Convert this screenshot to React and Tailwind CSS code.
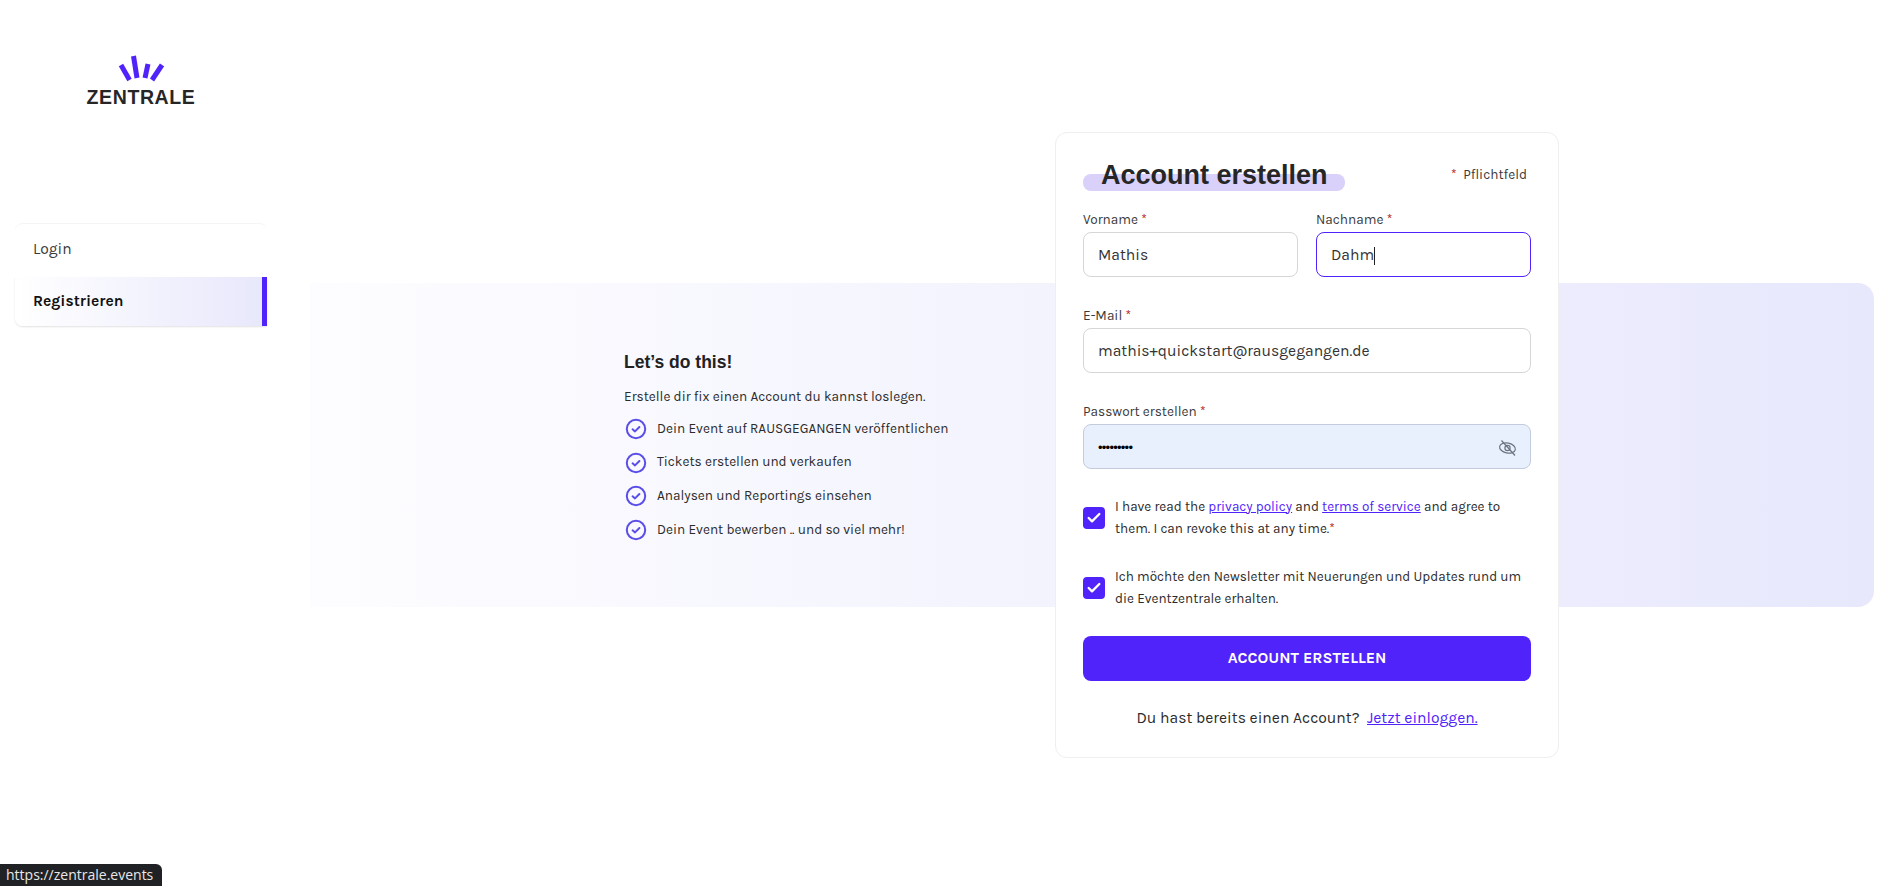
import React from 'react';
import { Check } from 'lucide-react';

const BODY = "font-['Karla','Noto_Sans',sans-serif]";

const Logo = () => (
    <div className="flex flex-col items-center w-[110px] ml-[86px]">
        <svg width="46" height="28" viewBox="0 0 46 28" className="block">
            <g stroke="#5123fb" strokeWidth="5" fill="none">
                <path d="M3 10 L11.5 25" />
                <path d="M15.5 1 L19 23" />
                <path d="M30 9 L27 23" />
                <path d="M44 10 L34 25" />
            </g>
        </svg>
        <span className="font-['Liberation_Sans',sans-serif] font-bold text-[19.5px] leading-[18px] mt-[5px] text-[#262626] tracking-[0.6px] whitespace-nowrap">ZENTRALE</span>
    </div>
);

const Sidebar = () => (
    <aside className="w-[290px] shrink-0 pt-[55px]">
        <Logo />
        <nav className="mt-[117px] ml-[15px] w-[252px] rounded-t-lg border-t border-[#f5f5f5]">
            <a className="flex items-center h-[53px] pb-[2px] pl-[18px] text-[15.6px] text-[#3a3a3a]">Login</a>
            <a className="flex items-center h-[49px] pl-[18px] text-[15.6px] font-bold text-[#111] rounded-bl-lg border-r-[5px] border-[#5123fb] bg-linear-to-r from-white to-[#e8e8fc] shadow-[0_1px_2px_rgba(0,0,0,0.12)]">Registrieren</a>
        </nav>
    </aside>
);

const BENEFITS = [
    'Dein Event auf RAUSGEGANGEN veröffentlichen',
    'Tickets erstellen und verkaufen',
    'Analysen und Reportings einsehen',
    'Dein Event bewerben .. und so viel mehr!',
];

const CheckCircle = () => (
    <svg width="22" height="22" viewBox="0 0 22 22" fill="none" className="shrink-0">
        <circle cx="11" cy="11" r="9.2" stroke="#5a4ee8" strokeWidth="2" />
        <path d="M7.6 11.3 L10 13.4 L14.4 9" stroke="#5a4ee8" strokeWidth="2" strokeLinecap="round" strokeLinejoin="round" />
    </svg>
);

const EyeSlash = () => (
    <svg width="20" height="18" viewBox="0 0 20 18" fill="none" stroke="#6b7280" strokeWidth="1.2" className="ml-auto">
        <ellipse cx="9.5" cy="9" rx="8" ry="5" transform="rotate(12 9.5 9)" />
        <circle cx="9.5" cy="9" r="2.6" />
        <path d="M3.5 1.5 L17 16.5" />
    </svg>
);

const Intro = () => (
    <div className="relative w-[420px] ml-[334px] mt-[8px] text-[#2b2b2b]">
        <h2 className="font-['Liberation_Sans',sans-serif] font-bold text-[17.5px] leading-[22px] text-[#222]">Let’s do this!</h2>
        <p className="mt-[15px] text-[13.6px] leading-[18px]">Erstelle dir fix einen Account du kannst loslegen.</p>
        <ul className="mt-[6px] flex flex-col">
            {BENEFITS.map((text) => (
                <li key={text} className="flex items-center gap-[10px] h-[33.7px] pl-[1px] text-[13.6px]">
                    <CheckCircle />
                    <span>{text}</span>
                </li>
            ))}
        </ul>
    </div>
);

const Star = () => <span className="text-[#b3261e]">*</span>;

const Field = ({ label, value, focused, autofill, children, className = '' }) => (
    <div className={className}>
        <label className="block text-[13.6px] leading-[18px] text-[#3a3a3a]">{label} <Star /></label>
        <div className={`mt-[3px] h-[45px] rounded-lg border flex items-center pt-[2px] pl-[14px] pr-[12px] text-[15.7px] text-[#333] ${focused ? 'border-[#5123fb]' : autofill ? 'border-[#c3cbdc] bg-[#e8f0fe]' : 'border-[#d6d6d6]'}`}>
            {value}
            {children}
        </div>
    </div>
);

const CheckBox = () => (
    <span className="w-[22px] h-[22px] shrink-0 rounded-[4px] bg-[#5123fb] flex items-center justify-center">
        <Check size={16} color="#fff" strokeWidth={3.5} />
    </span>
);

const TextLink = ({ children }) => <a className="text-[#5123fb] underline">{children}</a>;

const SignupCard = () => (
    <section className="relative ml-auto mr-[339px] w-[504px] h-[626px] shrink-0 rounded-xl border border-[#efefef] bg-white pt-[27px] pl-[27px] pr-[27px]">
        <div className="flex items-start justify-between h-[41px]">
            <div className="relative w-[262px] h-[31px]">
                <div className="absolute left-0 right-0 bottom-0 h-[17px] rounded-lg bg-[#d9d1f9]" />
                <h1 className="relative pl-[18px] font-['Liberation_Sans',sans-serif] font-bold text-[27px] leading-[30px] text-[#262626] whitespace-nowrap">Account erstellen</h1>
            </div>
            <span className="mt-[6px] mr-[4px] text-[13.6px] leading-[18px] text-[#3a3a3a]"><Star />&nbsp; Pflichtfeld</span>
        </div>
        <div className="flex gap-[18px] mt-[10px]">
            <Field className="flex-1" label="Vorname" value="Mathis" />
            <Field className="flex-1" label="Nachname" value="Dahm" focused>
                <span className="w-px h-[18px] bg-[#222]" />
            </Field>
        </div>
        <Field className="mt-[30px]" label="E-Mail" value="mathis+quickstart@rausgegangen.de" />
        <Field className="mt-[30px]" label="Passwort erstellen" autofill value={<span className="font-['Liberation_Sans',sans-serif] text-[13px] tracking-[-0.75px] text-black">•••••••••</span>}>
            <EyeSlash />
        </Field>
        <div className="mt-[27px] flex items-center gap-[10px] text-[13.5px] leading-[22px] text-[#2b2b2b]">
            <CheckBox />
            <p>I have read the <TextLink>privacy policy</TextLink> and <TextLink>terms of service</TextLink> and agree to them. I can revoke this at any time.<Star /></p>
        </div>
        <div className="mt-[26px] flex items-center gap-[10px] text-[13.5px] leading-[22px] text-[#2b2b2b]">
            <CheckBox />
            <p>Ich möchte den Newsletter mit Neuerungen und Updates rund um die Eventzentrale erhalten.</p>
        </div>
        <button className="mt-[26px] w-full h-[45px] rounded-lg bg-[#5123fb] text-white font-bold text-[15.8px]">ACCOUNT ERSTELLEN</button>
        <p className="mt-[26px] text-center text-[15.7px] leading-[22px] text-[#2b2b2b]">Du hast bereits einen Account?&nbsp; <TextLink>Jetzt einloggen.</TextLink></p>
    </section>
);

export default function App() {
    return (
        <div className={`relative h-screen overflow-hidden bg-white flex ${BODY}`}>
            <Sidebar />
            <main className="relative flex-1 flex items-center h-[890px]">
                <div className="absolute left-[20px] right-[24px] top-[283px] h-[324px] rounded-r-2xl bg-linear-to-r from-[#fdfdff] to-[#e8e8fd]" />
                <Intro />
                <SignupCard />
            </main>
            <div className="absolute left-0 bottom-0 h-[22px] w-[162px] rounded-tr-md bg-[#202124] pl-[6px] font-['Open_Sans',sans-serif] text-[14px] leading-[22px] text-[#e8e8e8]">https://zentrale.events</div>
        </div>
    );
}
